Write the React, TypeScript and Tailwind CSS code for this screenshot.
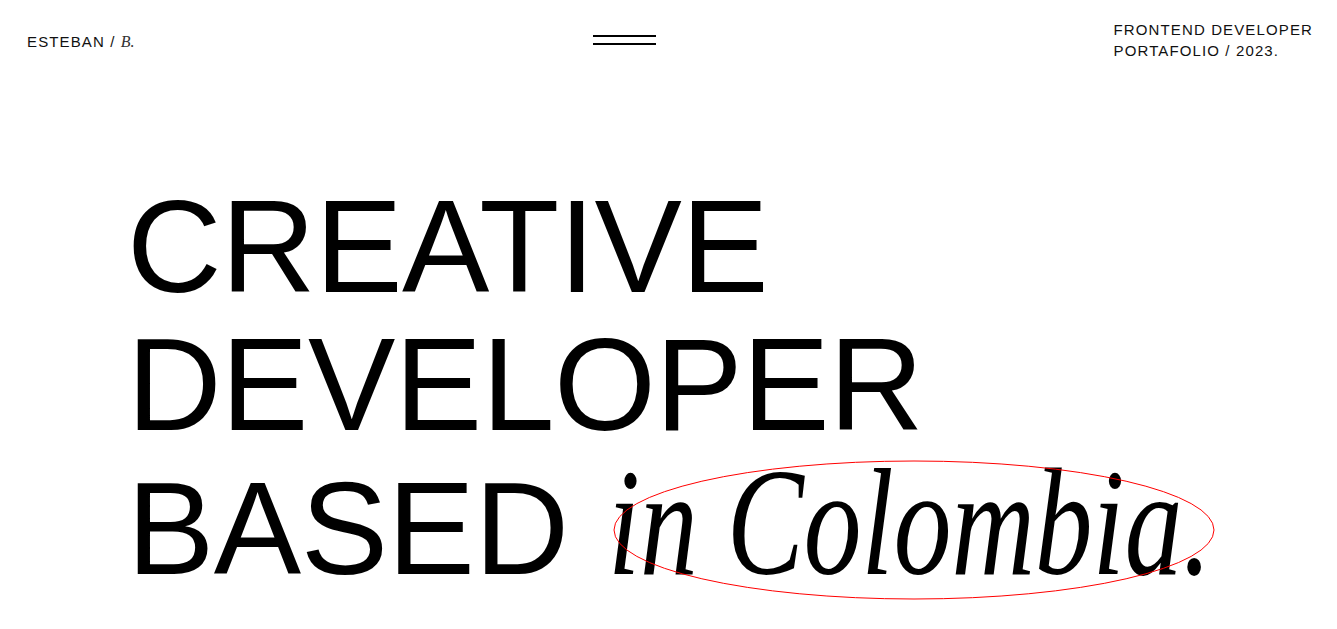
const sans = "font-['Liberation_Sans',Arial,sans-serif]";
const serif = "font-['Liberation_Serif','Times_New_Roman',serif]";

const Header = () => (
  <header
    className={`flex items-start justify-between pl-[27px] pr-[24px] pt-[19px] text-[15px] leading-[21px] tracking-[0.075em] text-[#111] ${sans}`}
  >
    <div className="mt-[12px]">
      ESTEBAN / <span className={`${serif} italic tracking-normal text-[16px] text-[#333]`}>B.</span>
    </div>
    <button className="mt-[16px] flex w-[63px] flex-col gap-[6px]" aria-label="menu">
      <span className="block h-[2px] w-full bg-black" />
      <span className="block h-[2px] w-full bg-black" />
    </button>
    <div>
      <p>FRONTEND DEVELOPER</p>
      <p>PORTAFOLIO / 2023.</p>
    </div>
  </header>
);

const App = () => {
  return (
    <div className="min-h-screen w-full overflow-hidden bg-white text-black">
      <Header />
      <main
        className={`pl-[127px] pt-[117px] text-[131px] leading-[138px] tracking-[-0.004em] ${sans}`}
      >
        <h1>
          <div>CREATIVE</div>
          <div>DEVELOPER</div>
          <div className="flex items-baseline whitespace-nowrap">
            <span>BASED</span>
            <span className="relative ml-[39px] inline-block w-[600px]">
              <span
                className={`inline-block origin-left scale-x-[0.76] text-[152px] italic leading-[138px] tracking-normal ${serif}`}
              >
                in Colombia.
              </span>
              <svg
                className="pointer-events-none absolute left-[4px] top-[5px]"
                width="604"
                height="142"
                viewBox="0 0 604 142"
              >
                <ellipse
                  cx="302"
                  cy="71"
                  rx="300"
                  ry="69"
                  fill="none"
                  stroke="#ff0000"
                  strokeWidth="1"
                />
              </svg>
            </span>
          </div>
        </h1>
      </main>
    </div>
  );
};

export default App;
